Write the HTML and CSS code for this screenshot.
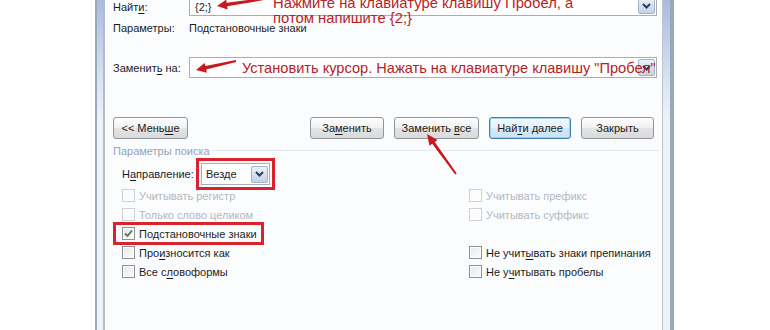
FILE: index.html
```html
<!DOCTYPE html>
<html lang="ru">
  <head>
    <meta charset="UTF-8" />
    <title>Найти и заменить</title>
    <link rel="stylesheet" href="styles.css">
  </head>
  <body>
    <div class="frame">
      <div class="client">
        <div class="row find">
          <span class="label">Найт<u>и</u>:</span>
          <div class="combo wide">
            <span class="value">{2;}</span>
            <span class="drop"><svg width="9" height="6" viewBox="0 0 9 6"><path d="M1 1l3.5 3.5L8 1" /></svg></span>
            <div class="note">Нажмите на клавиатуре клавишу Пробел, а<br />потом напишите {2;}</div>
          </div>
        </div>

        <div class="row params">
          <span class="label">Параметры:</span>
          <span>Подстановочные знаки</span>
        </div>

        <div class="row replace">
          <span class="label">Заменит<u>ь</u> на:</span>
          <div class="combo wide">
            <span class="value red">Установить курсор. Нажать на клавиатуре клавишу "Пробел"</span>
            <span class="drop"><svg width="9" height="6" viewBox="0 0 9 6"><path d="M1 1l3.5 3.5L8 1" /></svg></span>
          </div>
        </div>

        <div class="buttons">
          <button class="btn less">&lt;&lt; Мень<u>ш</u>е</button>
          <div class="actions">
            <button class="btn">За<u>м</u>енить</button>
            <button class="btn">Заменить <u>в</u>се</button>
            <button class="btn default">Най<u>т</u>и далее</button>
            <button class="btn">Закрыть</button>
          </div>
        </div>

        <div class="group-title">Параметры поиска</div>

        <div class="group">
          <div class="row direction">
            <span class="label">Н<u>а</u>правление:</span>
            <div class="combo small marked">
              <span class="value">Везде</span>
              <span class="drop"><svg width="9" height="6" viewBox="0 0 9 6"><path d="M1 1l3.5 3.5L8 1" /></svg></span>
            </div>
          </div>

          <div class="options">
            <label class="check off"><span class="box"></span><span>Учитывать регистр</span></label>
            <label class="check off"><span class="box"></span><span>Учитывать префикс</span></label>
            <label class="check off"><span class="box"></span><span>Только слово целиком</span></label>
            <label class="check off"><span class="box"></span><span>Учитывать суффикс</span></label>
            <label class="check marked"><span class="box"><svg width="11" height="11" viewBox="0 0 11 11"><path d="M2 5.5l2.5 2.5L9 2.5" /></svg></span><span>По<u>д</u>становочные знаки</span></label>
            <span></span>
            <label class="check"><span class="box"></span><span>Про<u>и</u>зносится как</span></label>
            <label class="check"><span class="box"></span><span>Не учит<u>ы</u>вать знаки препинания</span></label>
            <label class="check"><span class="box"></span><span>Все с<u>л</u>овоформы</span></label>
            <label class="check"><span class="box"></span><span>Не у<u>ч</u>итывать пробелы</span></label>
          </div>
        </div>
      </div>
    </div>

    <svg class="arrows" width="770" height="330" viewBox="0 0 770 330">
      <path d="M217 6 L226.2 -0.4 L226.6 2.7 L263.9 -2 L264.1 0 L227.2 6.3 L227.6 9.4 Z" />
      <path d="M196 70 L204.6 62.9 L205.4 66 L235.8 60 L236.2 62 L206.2 69.6 L206.9 72.7 Z" />
      <path d="M427 134 L437.5 140 L434.8 142 L456.8 173.4 L455.2 174.6 L432.2 143.8 L429.5 145.8 Z" />
    </svg>
  </body>
</html>
```

FILE: styles.css
```css
body {
  margin: 0;
  background: #fff;
  color: #1c1c1c;
  font-family: "Liberation Sans", Arial, sans-serif;
  font-size: 11px;
  overflow: hidden;
  position: relative;
}

u {
  text-decoration-thickness: 1px;
  text-underline-offset: 2px;
}

/* window frame */
.frame {
  box-sizing: border-box;
  width: 579px;
  height: 330px;
  margin-left: 95px;
  padding: 0 7px 0 6px;
  border-left: 2px solid #9ba9b9;
  border-right: 4px solid #9aa9b9;
  background: linear-gradient(#a9bbe0, #d9e3f3 80px, #eef2f8 120px);
}

.client {
  box-sizing: border-box;
  height: 100%;
  padding: 0 8px;
  border-left: 2px solid #b2bbc6;
  border-right: 1px solid #bcc4cc;
  background: #fbfcfe;
  display: flex;
  flex-direction: column;
}

.row {
  display: flex;
  align-items: center;
}

.label {
  flex: none;
  width: 76px;
}

.find {
  margin-top: -5px;
}

.find .label,
.find .value {
  padding-top: 3px;
}

.params {
  margin-top: 6px;
  line-height: 13px;
}

.replace {
  margin-top: 22px;
}

/* combo boxes */
.combo {
  box-sizing: border-box;
  flex: none;
  height: 21px;
  border: 1px solid #a9aeb6;
  background: #fff;
  display: flex;
  align-items: center;
  padding-left: 5px;
  position: relative;
}

.combo.wide {
  width: 468px;
  margin-right: -3px;
}

.combo .value {
  flex: 1;
  min-width: 0;
  white-space: nowrap;
  position: relative;
  z-index: 1;
}

.value.red {
  padding-left: 47px;
  color: #b4221f;
  font-size: 14.6px;
}

.drop {
  box-sizing: border-box;
  flex: none;
  width: 17px;
  height: 17px;
  margin-right: 1px;
  border: 1px solid #a2b3c9;
  border-radius: 2px;
  background: linear-gradient(#eef3f9, #d6e1ee 50%, #c4d3e5);
  display: flex;
  align-items: center;
  justify-content: center;
}

.drop path {
  fill: none;
  stroke: #2a3d60;
  stroke-width: 2;
}

.note {
  position: absolute;
  left: 83px;
  top: 0;
  color: #b8231f;
  font-size: 14.8px;
  line-height: 15px;
  white-space: nowrap;
  z-index: 2;
}

/* buttons */
.buttons {
  margin-top: 39px;
  display: flex;
  justify-content: space-between;
}

.actions {
  display: flex;
  gap: 10px;
}

.btn {
  box-sizing: border-box;
  height: 22px;
  width: 74px;
  padding: 0;
  border: 1px solid #8f959c;
  border-radius: 3px;
  background: linear-gradient(#fdfdfd, #f1f1f1 48%, #e3e3e3 52%, #dadada);
  color: #1c1c1c;
  font: inherit;
}

.btn.less {
  width: 75px;
}

.actions .btn:nth-child(2) {
  width: 85px;
}

.btn.default {
  width: 82px;
  border-color: #3c7fb1;
  box-shadow: inset 0 0 0 1px #9fd3f0;
  background: linear-gradient(#f3f9fd, #e6f1fa 48%, #d6e8f7 52%, #cbe1f4);
}

.actions .btn:last-child {
  width: 73px;
}

/* search options */
.group-title {
  margin-top: 6px;
  line-height: 13px;
  color: #97a2b3;
  display: flex;
  align-items: center;
  margin-right: -6px;
}

.group-title::after {
  content: "";
  flex: 1;
  height: 1px;
  margin-left: 1px;
  margin-top: -3px;
  background: #e3e8ee;
}

.group {
  padding-left: 9px;
}

.direction {
  margin-top: 5px;
}

.direction .label {
  width: 79px;
}

.combo.small {
  width: 69px;
  height: 22px;
  padding-left: 4px;
}

.marked {
  outline: 3px solid #d9222b;
}

.combo.marked {
  outline-offset: 2px;
}

.options {
  margin-top: 1px;
  display: grid;
  grid-template-columns: 347px 1fr;
  grid-auto-rows: 19px;
}

.check {
  justify-self: start;
  display: flex;
  align-items: center;
  gap: 4px;
  white-space: nowrap;
}

.check.marked {
  padding: 0 5px 0 7px;
  margin-left: -7px;
  outline-offset: -1px;
}

.box {
  box-sizing: border-box;
  width: 13px;
  height: 13px;
  border: 1px solid #8e9091;
  background: linear-gradient(135deg, #e4e6e8, #fdfdfd);
  box-shadow: inset 0 0 0 1px #fff;
  display: flex;
  align-items: center;
  justify-content: center;
}

.box path {
  fill: none;
  stroke: #4f7a4f;
  stroke-width: 1.8;
}

.check.off {
  color: #b3b8bd;
}

.check.off .box {
  border-color: #cdd1d5;
  background: #fcfcfd;
}

/* annotation arrows */
.arrows {
  position: absolute;
  left: 0;
  top: 0;
  pointer-events: none;
}

.arrows path {
  fill: #c8191e;
}
```
